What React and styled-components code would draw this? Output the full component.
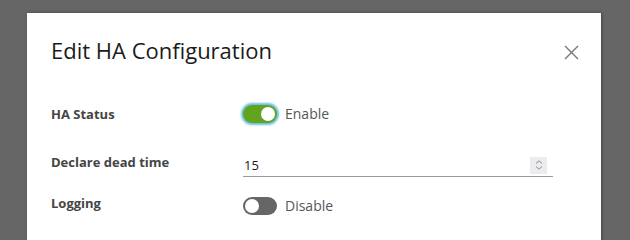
import React from "react";
import styled, { createGlobalStyle } from "styled-components";

const Global = createGlobalStyle`
  html, body { margin: 0; padding: 0; background: #666666; overflow: hidden; }
  body { font-family: "Open Sans", "Liberation Sans", sans-serif; }
`;

const Backdrop = styled.div`
  width: 100vw;
  height: 100vh;
  min-height: 208px;
  background: #666666;
  padding: 13px 0 0 27px;
  box-sizing: border-box;
  overflow: hidden;
`;

const Modal = styled.div`
  width: 574px;
  height: 600px;
  background: #ffffff;
  box-shadow: 1px 0 3px rgba(0, 0, 0, 0.35);
  padding: 22px 22px 0 24px;
  box-sizing: border-box;
`;

const Header = styled.div`
  display: flex;
  align-items: center;
  justify-content: space-between;
  height: 30px;
`;

const Title = styled.h3`
  margin: 0;
  font-family: "Open Sans", "Liberation Sans", sans-serif;
  font-weight: 400;
  font-size: 22px;
  color: #1b1b1b;
`;

const Close = styled.button`
  border: 0;
  background: none;
  padding: 0;
  margin-top: 4px;
  width: 15px;
  height: 15px;
  display: flex;
`;

const Form = styled.div`
  display: grid;
  grid-template-columns: 192px 310px;
  grid-template-rows: 46px 44px 44px;
  margin-top: 38px;
`;

const Label = styled.div`
  font-family: "Open Sans", "Liberation Sans", sans-serif;
  font-weight: 700;
  font-size: 13px;
  color: #454545;
  padding-top: ${(p) => p.$pt || 0}px;
`;

const Control = styled.div`
  display: flex;
  align-items: flex-start;
  padding-top: ${(p) => p.$pt || 0}px;
`;

const Track = styled.div`
  position: relative;
  width: 34px;
  height: 18px;
  border-radius: 9px;
  background: ${(p) => (p.$on ? "#62a420" : "#666666")};
  box-shadow: ${(p) => (p.$focus ? "0 0 2px 2px #6bc1e3" : "none")};
  flex-shrink: 0;
`;

const Knob = styled.div`
  position: absolute;
  top: 2px;
  left: ${(p) => (p.$on ? "18px" : "2px")};
  width: 14px;
  height: 14px;
  border-radius: 50%;
  background: #ffffff;
`;

const ToggleText = styled.span`
  margin-left: 8px;
  font-family: "Open Sans", "Liberation Sans", sans-serif;
  font-size: 14px;
  color: #565656;
  line-height: 18px;
`;

const InputWrap = styled.div`
  width: 310px;
  height: 22px;
  border-bottom: 1px solid #9a9a9a;
  display: flex;
  align-items: center;
`;

const Input = styled.div`
  font-family: "Open Sans", "Liberation Sans", sans-serif;
  font-size: 13px;
  color: #1a1a1a;
  padding-left: 1px;
  flex: 1;
`;

const Spinner = styled.div`
  width: 17px;
  height: 17px;
  margin-right: 6px;
  background: #ececf0;
  display: flex;
  flex-direction: column;
  align-items: center;
  justify-content: center;
  gap: 2px;
`;

function Toggle({ on, focus, label }) {
  return (
    <>
      <Track $on={on} $focus={focus}>
        <Knob $on={on} />
      </Track>
      <ToggleText>{label}</ToggleText>
    </>
  );
}

export default function App() {
  return (
    <Backdrop>
      <Global />
      <Modal>
        <Header>
          <Title>Edit HA Configuration</Title>
          <Close aria-label="Close">
            <svg width="15" height="15" viewBox="0 0 15 15">
              <path d="M1 1 L14 14 M14 1 L1 14" stroke="#777" strokeWidth="1.4" fill="none" />
            </svg>
          </Close>
        </Header>
        <Form>
          <Label $pt={2}>HA Status</Label>
          <Control $pt={2}>
            <Toggle on focus label="Enable" />
          </Control>
          <Label $pt={4}>Declare dead time</Label>
          <Control $pt={5}>
            <InputWrap>
              <Input>15</Input>
              <Spinner>
                <svg width="8" height="4" viewBox="0 0 8 4">
                  <path d="M1 3.5 L4 0.8 L7 3.5" stroke="#8a8a8a" strokeWidth="1" fill="none" />
                </svg>
                <svg width="8" height="4" viewBox="0 0 8 4">
                  <path d="M1 0.5 L4 3.2 L7 0.5" stroke="#8a8a8a" strokeWidth="1" fill="none" />
                </svg>
              </Spinner>
            </InputWrap>
          </Control>
          <Label $pt={1}>Logging</Label>
          <Control $pt={4}>
            <Toggle label="Disable" />
          </Control>
        </Form>
      </Modal>
    </Backdrop>
  );
}
